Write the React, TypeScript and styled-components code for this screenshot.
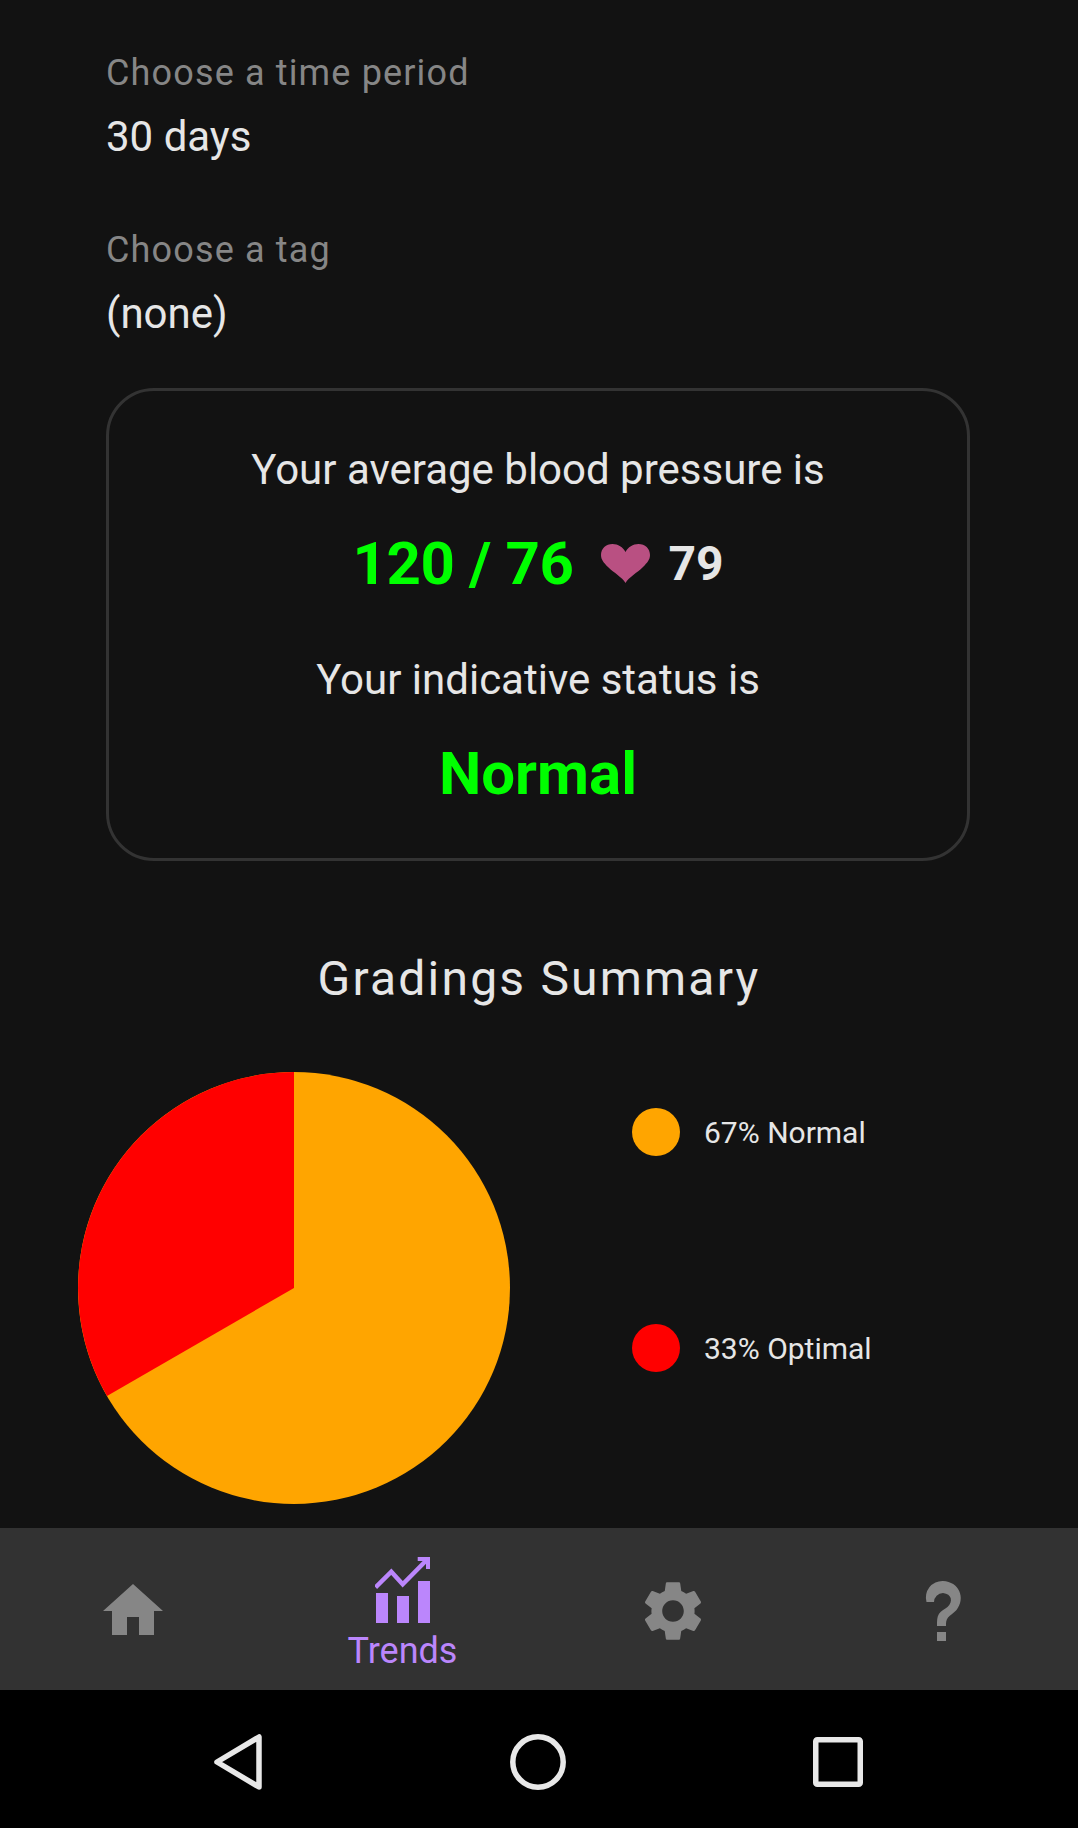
import React from 'react';
import styled, { createGlobalStyle } from 'styled-components';

const Global = createGlobalStyle`
  html, body { margin: 0; padding: 0; background: #121212; }
  * { box-sizing: border-box; }
`;

const Screen = styled.div`
  width: 1078px;
  height: 1828px;
  display: flex;
  flex-direction: column;
  background: #121212;
  font-family: Roboto, sans-serif;
  color: #e6e6e6;
  overflow: hidden;
`;

const Content = styled.main`
  flex: 1;
  min-height: 0;
  display: flex;
  flex-direction: column;
  padding: 49px 0 0;
`;

const Field = styled.div`
  display: flex;
  flex-direction: column;
  padding: 0 106px;

  & + & {
    margin-top: 64px;
  }
`;

const FieldLabel = styled.div`
  font-size: 36px;
  line-height: 48px;
  letter-spacing: 1.15px;
  color: #868686;
`;

const FieldValue = styled.div`
  margin-top: 15px;
  font-size: 42px;
  line-height: 50px;
  color: #e6e6e6;
`;

const Card = styled.section`
  flex: none;
  width: 864px;
  height: 473px;
  margin: 49px 0 0 106px;
  border: 3px solid #333;
  border-radius: 48px;
  display: flex;
  flex-direction: column;
  align-items: center;
  padding-top: 54px;
`;

const CardText = styled.div`
  font-size: 42px;
  line-height: 50px;
  height: 50px;
`;

const Reading = styled.div`
  display: flex;
  align-items: center;
  height: 80px;
  margin: 28px 0 52px;
`;

const Pressure = styled.span`
  font-size: 60px;
  font-weight: 700;
  letter-spacing: -0.4px;
  color: #00ff00;
`;

const HeartIcon = styled.svg`
  width: 49px;
  height: 39px;
  margin: 0 18px 0 28px;
  fill: #b95082;
`;

const Pulse = styled.span`
  font-size: 48px;
  font-weight: 700;
  color: #e6e6e6;
`;

const Status = styled.div`
  margin-top: 34px;
  font-size: 60px;
  line-height: 70px;
  font-weight: 700;
  color: #00ff00;
`;

const SectionTitle = styled.h2`
  margin: 91px 0 0;
  font-size: 48px;
  line-height: 54px;
  font-weight: 400;
  letter-spacing: 2.2px;
  text-align: center;
  color: #e6e6e6;
`;

const Summary = styled.div`
  display: flex;
  margin-top: 66px;
`;

const Pie = styled.svg`
  width: 432px;
  height: 432px;
  margin-left: 78px;
  flex: none;
`;

const Legend = styled.div`
  margin-left: 122px;
  display: flex;
  flex-direction: column;
  gap: 168px;
  padding-top: 36px;
`;

const LegendRow = styled.div`
  display: flex;
  align-items: center;
  height: 48px;
`;

const Dot = styled.span<{ $color: string }>`
  width: 48px;
  height: 48px;
  border-radius: 50%;
  background: ${p => p.$color};
`;

const LegendText = styled.span`
  margin-left: 24px;
  font-size: 30px;
  color: #e6e6e6;
`;

const TabBar = styled.nav`
  flex: none;
  height: 162px;
  background: #323232;
  display: grid;
  grid-template-columns: 266px 273px 268px 271px;
`;

const Tab = styled.div<{ $active?: boolean }>`
  display: flex;
  flex-direction: column;
  align-items: center;
  justify-content: ${p => (p.$active ? 'flex-start' : 'center')};
  padding-top: ${p => (p.$active ? '29px' : '3px')};
  color: ${p => (p.$active ? '#bb86fc' : '#868686')};
`;

const TabIcon = styled.svg`
  width: 72px;
  height: 72px;
  fill: currentColor;
`;

const TrendIcon = styled.svg`
  width: 56px;
  height: 67px;
  fill: currentColor;
`;

const TabLabel = styled.span`
  margin-top: 5px;
  font-size: 36px;
  line-height: 44px;
`;

const SystemBar = styled.div`
  flex: none;
  height: 138px;
  padding-top: 6px;
  background: #000;
  display: grid;
  grid-template-columns: 214px 48px 248px 56px 247px 50px;
  align-items: center;
`;

const SystemIcon = styled.svg<{ $col: number }>`
  grid-column: ${p => p.$col};
  display: block;
  fill: none;
  stroke: #e8e8e8;
  stroke-width: 5.5;
  stroke-linejoin: round;
`;

export default function App() {
  return (
    <Screen>
      <Global />
      <Content>
        <Field>
          <FieldLabel>Choose a time period</FieldLabel>
          <FieldValue>30 days</FieldValue>
        </Field>
        <Field>
          <FieldLabel>Choose a tag</FieldLabel>
          <FieldValue>(none)</FieldValue>
        </Field>
        <Card>
          <CardText>Your average blood pressure is</CardText>
          <Reading>
            <Pressure>120 / 76</Pressure>
            <HeartIcon viewBox="0 0 49 39">
              <path d="M24.5 39C21 33 13 29 7 23 2.5 18.5 0 15.5 0 11 0 4.5 5 0 11.5 0 17 0 22 3 24.5 8 27 3 32 0 37.5 0 44 0 49 4.5 49 11 49 15.5 46.5 18.5 42 23 36 29 28 33 24.5 39Z" />
            </HeartIcon>
            <Pulse>79</Pulse>
          </Reading>
          <CardText>Your indicative status is</CardText>
          <Status>Normal</Status>
        </Card>
        <SectionTitle>Gradings Summary</SectionTitle>
        <Summary>
          <Pie viewBox="0 0 432 432">
            <circle cx="216" cy="216" r="216" fill="#ffa500" />
            <path d="M216 216 L29 324 A216 216 0 0 1 216 0 Z" fill="#ff0000" />
          </Pie>
          <Legend>
            <LegendRow>
              <Dot $color="#ffa500" />
              <LegendText>67% Normal</LegendText>
            </LegendRow>
            <LegendRow>
              <Dot $color="#ff0000" />
              <LegendText>33% Optimal</LegendText>
            </LegendRow>
          </Legend>
        </Summary>
      </Content>
      <TabBar>
        <Tab>
          <TabIcon viewBox="0 0 24 24"><path d="M10 20v-6h4v6h5v-8h3L12 3 2 12h3v8z" /></TabIcon>
        </Tab>
        <Tab $active>
          <TrendIcon viewBox="0 0 56 67">
            <rect x="1" y="36" width="12" height="30" />
            <rect x="22" y="39" width="12" height="27" />
            <rect x="43" y="24" width="12" height="42" />
            <path d="M0.5 30.3 16.3 14.7 27.7 27.3 51.7 3" fill="none" stroke="currentColor" strokeWidth="4.5" />
            <path d="M42.7 0H55V12H51V4H42.7Z" />
          </TrendIcon>
          <TabLabel>Trends</TabLabel>
        </Tab>
        <Tab>
          <TabIcon viewBox="0 0 24 24"><path d="M19.14 12.94c.04-.3.06-.61.06-.94 0-.32-.02-.64-.07-.94l2.03-1.58c.18-.14.23-.41.12-.61l-1.92-3.32c-.12-.22-.37-.29-.59-.22l-2.39.96c-.5-.38-1.03-.7-1.62-.94l-.36-2.54c-.04-.24-.24-.41-.48-.41h-3.84c-.24 0-.43.17-.47.41l-.36 2.54c-.59.24-1.13.57-1.62.94l-2.39-.96c-.22-.08-.47 0-.59.22L2.74 8.87c-.12.21-.08.47.12.61l2.03 1.58c-.05.3-.09.63-.09.94s.02.64.07.94l-2.03 1.58c-.18.14-.23.41-.12.61l1.92 3.32c.12.22.37.29.59.22l2.39-.96c.5.38 1.03.7 1.62.94l.36 2.54c.05.24.24.41.48.41h3.84c.24 0 .44-.17.47-.41l.36-2.54c.59-.24 1.13-.56 1.62-.94l2.39.96c.22.08.47 0 .59-.22l1.92-3.32c.12-.22.07-.47-.12-.61l-2.01-1.58zM12 15.6c-1.98 0-3.6-1.62-3.6-3.6s1.62-3.6 3.6-3.6 3.6 1.62 3.6 3.6-1.62 3.6-3.6 3.6z" /></TabIcon>
        </Tab>
        <Tab>
          <TabIcon viewBox="0 0 24 24"><path d="M10,19H13V22H10V19M12,2C17.35,2.22 19.68,7.62 16.5,11.67C15.67,12.67 14.33,13.33 13.67,14.17C13,15 13,16 13,17H10C10,15.33 10,13.92 10.67,12.92C11.33,11.92 12.67,11.33 13.5,10.67C15.44,8.87 14.96,6.33 12,6A3,3 0 0,0 9,9H6.5A5.5,5.5 0 0,1 12,2Z" /></TabIcon>
        </Tab>
      </TabBar>
      <SystemBar>
        <SystemIcon $col={2} width="48" height="56" viewBox="0 0 48 56">
          <path d="M45 3 V53 L3 28 Z" />
        </SystemIcon>
        <SystemIcon $col={4} width="56" height="56" viewBox="0 0 56 56">
          <circle cx="28" cy="28" r="25.2" />
        </SystemIcon>
        <SystemIcon $col={6} width="50" height="50" viewBox="0 0 50 50">
          <rect x="2.75" y="2.75" width="44.5" height="44.5" rx="1.5" />
        </SystemIcon>
      </SystemBar>
    </Screen>
  );
}
